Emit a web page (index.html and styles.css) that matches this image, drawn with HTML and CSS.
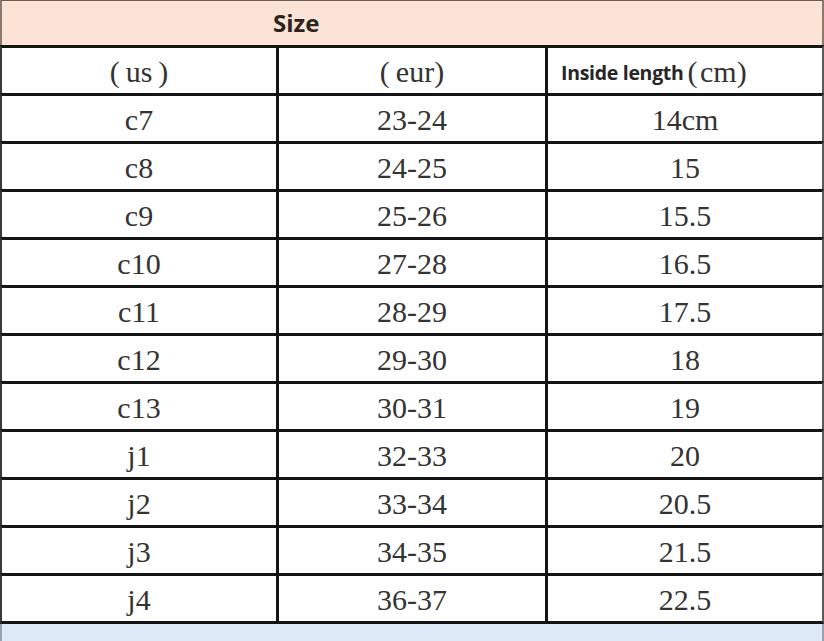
FILE: index.html
```html
<!DOCTYPE html>
<html>
<head>
<meta charset="utf-8">
<link rel="stylesheet" href="styles.css">
</head>
<body>
<div class="sheet">
  <div class="title"><span class="title-text">Size</span></div>
  <div class="row head">
    <div class="cell">(&#8201;us&#8201;)</div>
    <div class="cell">(&#8201;eur)</div>
    <div class="cell left"><span class="sans">Inside length</span><span class="paren">(&#8202;cm)</span></div>
  </div>
  <div class="row"><div class="cell">c7</div><div class="cell">23-24</div><div class="cell">14cm</div></div>
  <div class="row"><div class="cell">c8</div><div class="cell">24-25</div><div class="cell">15</div></div>
  <div class="row"><div class="cell">c9</div><div class="cell">25-26</div><div class="cell">15.5</div></div>
  <div class="row"><div class="cell">c10</div><div class="cell">27-28</div><div class="cell">16.5</div></div>
  <div class="row"><div class="cell">c11</div><div class="cell">28-29</div><div class="cell">17.5</div></div>
  <div class="row"><div class="cell">c12</div><div class="cell">29-30</div><div class="cell">18</div></div>
  <div class="row"><div class="cell">c13</div><div class="cell">30-31</div><div class="cell">19</div></div>
  <div class="row"><div class="cell">j1</div><div class="cell">32-33</div><div class="cell">20</div></div>
  <div class="row"><div class="cell">j2</div><div class="cell">33-34</div><div class="cell">20.5</div></div>
  <div class="row"><div class="cell">j3</div><div class="cell">34-35</div><div class="cell">21.5</div></div>
  <div class="row last"><div class="cell">j4</div><div class="cell">36-37</div><div class="cell">22.5</div></div>
  <div class="footer"></div>
</div>
</body>
</html>
```
FILE: styles.css
```css
html, body {
  margin: 0;
  padding: 0;
  background: #ffffff;
}
.sheet {
  width: 824px;
  height: 641px;
  overflow: hidden;
  display: flex;
  flex-direction: column;
  font-family: "Liberation Serif", "Times New Roman", serif;
  color: #333333;
}
.title {
  height: 44px;
  flex: none;
  background: #fbe4d6;
  border-top: 1px solid #6b5e58;
  border-left: 2px solid #8a7a72;
  border-right: 2px solid #8a7a72;
  display: flex;
  align-items: center;
  padding-left: 271px;
  box-sizing: content-box;
  width: 549px;
}
.title-text {
  font-family: "Open Sans", "Liberation Sans", sans-serif;
  font-weight: 700;
  font-size: 24px;
  color: #2b2420;
  position: relative;
  top: -1px;
}
.row {
  display: grid;
  grid-template-columns: 274px 269px 277px;
  height: 45px;
  flex: none;
  border-top: 3px solid #151515;
  border-left: 2px solid #3a3a3a;
  border-right: 2px solid #5a5a5a;
}
.row.last {
  border-bottom: 3px solid #151515;
}
.cell {
  display: flex;
  align-items: center;
  justify-content: center;
  font-size: 30px;
  line-height: 1;
  padding-top: 2px;
}
.cell + .cell {
  border-left: 3px solid #151515;
}
.cell.left {
  justify-content: flex-start;
  padding-left: 13px;
}
.sans {
  font-family: "Open Sans", "Liberation Sans", sans-serif;
  font-weight: 700;
  font-size: 19.5px;
  color: #262626;
  letter-spacing: -0.3px;
  margin-right: 4px;
  position: relative;
  top: 1px;
}
.paren {
  font-size: 30px;
}
.footer {
  flex: 1;
  background: #dde9f6;
  border-left: 2px solid #9aa4ae;
  border-right: 2px solid #9aa4ae;
}
```
